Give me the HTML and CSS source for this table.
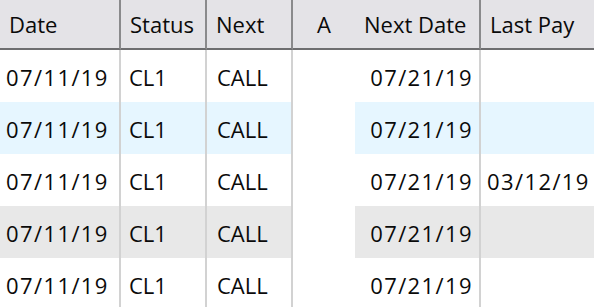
FILE: index.html
```html
<!DOCTYPE html>
<html>
<head>
<meta charset="utf-8">
<link rel="stylesheet" href="styles.css">
</head>
<body>
<div class="grid">
  <div class="hd">Date</div>
  <div class="hd">Status</div>
  <div class="hd">Next</div>
  <div class="hd center nob">A</div>
  <div class="hd">Next Date</div>
  <div class="hd nob">Last Pay</div>

  <div class="c num">07/11/19</div><div class="c">CL1</div><div class="c pad">CALL</div><div class="c nob"></div><div class="c num right">07/21/19</div><div class="c nob"></div>

  <div class="c num blue">07/11/19</div><div class="c blue">CL1</div><div class="c pad blue">CALL</div><div class="c nob"></div><div class="c num right blue">07/21/19</div><div class="c nob blue"></div>

  <div class="c num">07/11/19</div><div class="c">CL1</div><div class="c pad">CALL</div><div class="c nob"></div><div class="c num right">07/21/19</div><div class="c num nob">03/12/19</div>

  <div class="c num gray">07/11/19</div><div class="c gray">CL1</div><div class="c pad gray">CALL</div><div class="c nob"></div><div class="c num right gray">07/21/19</div><div class="c nob gray"></div>

  <div class="c num">07/11/19</div><div class="c">CL1</div><div class="c pad">CALL</div><div class="c nob"></div><div class="c num right">07/21/19</div><div class="c nob"></div>
</div>
</body>
</html>
```

FILE: styles.css
```css
html, body {
  margin: 0;
  padding: 0;
  background: #ffffff;
  overflow: hidden;
}

.grid {
  display: grid;
  grid-template-columns: 121px 86px 86px 62px 126px 1fr;
  grid-template-rows: 50px 52px 52px 52px 52px 52px;
  font-family: "Open Sans", "Noto Sans", sans-serif;
  font-size: 22px;
  font-weight: 500;
  color: #0a0a0a;
  width: 594px;
}

.hd {
  background: #e4e3e7;
  border-right: 2px solid #8a8a8c;
  border-bottom: 2px solid #6e6e70;
  display: flex;
  align-items: center;
  padding-left: 9px;
  padding-bottom: 1px;
  white-space: nowrap;
}

.c {
  border-right: 2px solid #d2d2d2;
  display: flex;
  align-items: center;
  padding-left: 8px;
  padding-top: 2px;
  white-space: nowrap;
}

.pad {
  padding-left: 10px;
}

.num {
  letter-spacing: 1.4px;
  padding-left: 6px;
}

.right {
  justify-content: flex-end;
  padding-right: 6px;
  padding-left: 0;
}

.center {
  justify-content: center;
  padding-left: 0;
}

.nob {
  border-right: none;
}

.blue {
  background: #e6f6ff;
}

.gray {
  background: #e8e8e8;
}
```
